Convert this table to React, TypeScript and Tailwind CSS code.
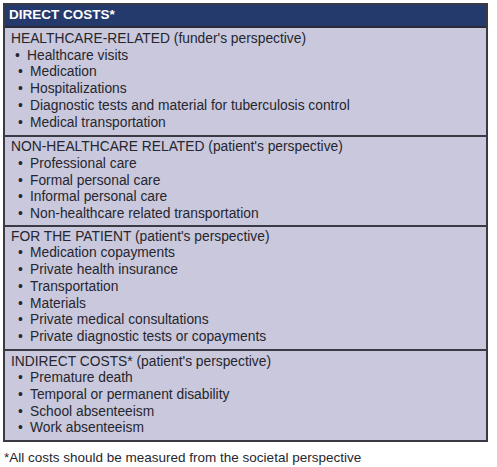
import React from "react";

const sections: { title: string; note: string; items: string[]; pad: string }[] = [
  {
    title: "HEALTHCARE-RELATED",
    note: " (funder's perspective)",
    items: [
      "Healthcare visits",
      "Medication",
      "Hospitalizations",
      "Diagnostic tests and material for tuberculosis control",
      "Medical transportation",
    ],
    pad: "pt-[3px] pb-[4px]",
  },
  {
    title: "NON-HEALTHCARE RELATED",
    note: " (patient's perspective)",
    items: [
      "Professional care",
      "Formal personal care",
      "Informal personal care",
      "Non-healthcare related transportation",
    ],
    pad: "pt-[2px] pb-[2px] border-t-2 border-[#3a3a44]",
  },
  {
    title: "FOR THE PATIENT",
    note: " (patient's perspective)",
    items: [
      "Medication copayments",
      "Private health insurance",
      "Transportation",
      "Materials",
      "Private medical consultations",
      "Private diagnostic tests or copayments",
    ],
    pad: "pt-[2px] pb-[3px] border-t-2 border-[#3a3a44]",
  },
  {
    title: "INDIRECT COSTS*",
    note: " (patient's perspective)",
    items: [
      "Premature death",
      "Temporal or permanent disability",
      "School absenteeism",
      "Work absenteeism",
    ],
    pad: "pt-[3px] pb-[3px] border-t-2 border-[#3a3a44]",
  },
];

export default function App() {
  return (
    <div
      className="w-[497px] h-[467px] bg-white pt-[3px] pl-[3px] text-[#26262e]"
      style={{ fontFamily: '"Liberation Sans", Arial, sans-serif' }}
    >
      <div className="w-[485px] border-2 border-[#3a3a44] bg-[#c9c8dc]">
        <div className="h-[23px] bg-[#253a6c] pl-[4px] flex items-center text-white font-bold text-[13.5px] border-b-2 border-[#2a2a38]">
          DIRECT COSTS*
        </div>
        {sections.map((s, i) => (
          <div key={i} className={"pr-[3px] text-[13.8px] leading-[16.7px] " + s.pad}>
            <div className="pl-[6px]">
              {s.title}
              {s.note}
            </div>
            {s.items.map((it, j) => (
              <div key={j} className="flex">
                <span
                  className={
                    i === 0 && j === 0 ? "w-[22px] shrink-0 pl-[10px]" : "w-[25px] shrink-0 pl-[13px]"
                  }
                >
                  •
                </span>
                <span>{it}</span>
              </div>
            ))}
          </div>
        ))}
      </div>
      <div className="mt-[8px] text-[13.5px] leading-[16px] pl-[1px]">
        *All costs should be measured from the societal perspective
      </div>
    </div>
  );
}
